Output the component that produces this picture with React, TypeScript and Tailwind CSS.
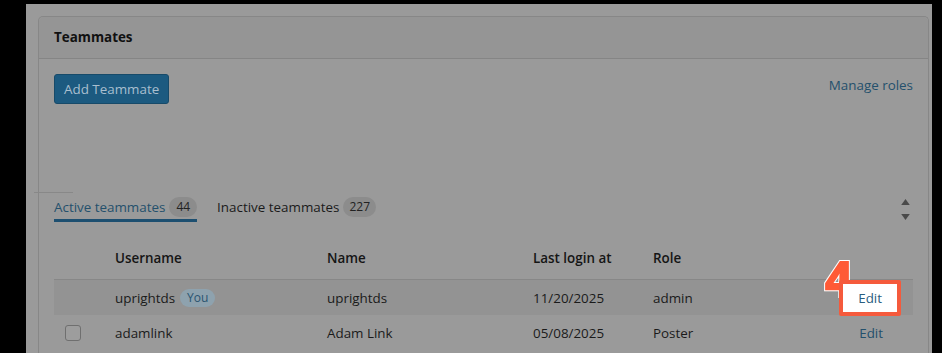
import React from 'react';

const font = { fontFamily: '"Open Sans", "Noto Sans", sans-serif' };

function SortArrows() {
  return (
    <div className="flex flex-col items-center gap-[9px] mr-[3px] mt-[2px]">
      <svg width="9" height="6" viewBox="0 0 10 7">
        <path d="M5 0 L10 7 L0 7 Z" fill="#4a4a4a" />
      </svg>
      <svg width="9" height="6" viewBox="0 0 10 7">
        <path d="M0 0 L10 0 L5 7 Z" fill="#4a4a4a" />
      </svg>
    </div>
  );
}

export default function App() {
  const cols = 'grid grid-cols-[61px_212px_206px_120px_1fr] items-center';
  return (
    <div className="w-[942px] h-[353px] bg-black overflow-hidden pt-[4px] pl-[26px] pr-[10px]" style={font}>
      <div className="relative h-full bg-[#9a9a9a] pl-[12px] pr-[3px] pt-[12px] text-[13.4px] text-[#1a1a1a]">
        {/* stray guide line */}
        <div className="absolute left-[8px] top-[188px] w-[39px] h-px bg-[#888888]" />

        <div className="h-full rounded-t-[5px] border border-b-0 border-[#878787]">
          {/* Header */}
          <div className="h-[42px] flex items-center px-[15px] bg-[#959595] border-b border-[#858585] rounded-t-[5px]">
            <h2 className="font-bold text-[13.4px] text-[#111111]">Teammates</h2>
          </div>

          {/* Body */}
          <div className="px-[15px] pt-[15px]">
            <div className="flex items-start justify-between">
              <button className="h-[30px] px-[9px] rounded-[3px] bg-[#1c5a80] border border-[#174a69] text-[#a9bfcf] text-[13.4px]">
                Add Teammate
              </button>
              <a className="mt-[1px] text-[#24506c]">Manage roles</a>
            </div>

            {/* Tabs */}
            <div className="mt-[93px] flex items-start justify-between">
              <div className="flex items-center gap-[20px]">
                <div className="flex items-center gap-[4px] pb-[2px] border-b-[3px] border-[#1d4f70]">
                  <span className="text-[#24506c]">Active teammates</span>
                  <span className="px-[7px] h-[20px] leading-[20px] rounded-full bg-[#8c8c8c] text-[12px] text-[#222]">44</span>
                </div>
                <div className="flex items-center gap-[4px] pb-[2px] border-b-[3px] border-transparent">
                  <span className="text-[#1a1a1a]">Inactive teammates</span>
                  <span className="px-[6px] h-[20px] leading-[20px] rounded-full bg-[#8c8c8c] text-[12px] text-[#222]">227</span>
                </div>
              </div>
              <SortArrows />
            </div>

            {/* Table */}
            <div className="mt-[14px]">
              <div className={`${cols} h-[44px] pt-[1px] border-b border-[#878787] font-semibold text-[#151515]`}>
                <div />
                <div>Username</div>
                <div>Name</div>
                <div>Last login at</div>
                <div>Role</div>
              </div>

              <div className={`${cols} h-[35px] bg-[#939393]`}>
                <div />
                <div className="flex items-center gap-[5px]">
                  <span>uprightds</span>
                  <span className="px-[7px] h-[18px] leading-[18px] rounded-full bg-[#8ea2ae] text-[12px] text-[#2b5470]">You</span>
                </div>
                <div>uprightds</div>
                <div>11/20/2025</div>
                <div className="flex items-center justify-between pr-[12px]">
                  <span>admin</span>
                  <div className="relative">
                    <span className="absolute -left-[15px] -top-[27px] text-[50px] font-extrabold leading-none text-[#ff5a36] [-webkit-text-stroke:2px_#ffffff] [paint-order:stroke_fill]">
                      4
                    </span>
                    <div className="relative border-[4px] border-[#f55a3c] rounded-[2px] bg-white px-[15px] h-[36px] flex items-center text-[#2a5d80]">
                      Edit
                    </div>
                  </div>
                </div>
              </div>

              <div className={`${cols} h-[36px]`}>
                <div className="pl-[11px]">
                  <div className="w-[16px] h-[16px] rounded-[3px] border border-[#6f6f6f] bg-[#9d9d9d]" />
                </div>
                <div>adamlink</div>
                <div>Adam Link</div>
                <div>05/08/2025</div>
                <div className="flex items-center justify-between pr-[30px]">
                  <span>Poster</span>
                  <span className="text-[#24506c]">Edit</span>
                </div>
              </div>
            </div>
          </div>
        </div>
      </div>
    </div>
  );
}
